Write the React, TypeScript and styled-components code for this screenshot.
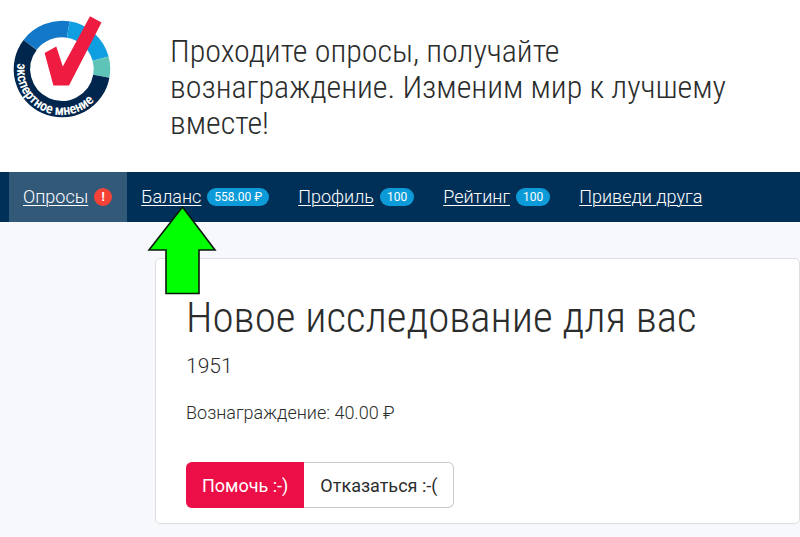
import React from "react";
import styled, { createGlobalStyle } from "styled-components";

const GlobalStyle = createGlobalStyle`
  * { box-sizing: border-box; }
  body {
    margin: 0;
    background: #f7f8fb;
    color: #2b2d2c;
    font-family: Roboto, "Liberation Sans", sans-serif;
    font-size: 18px;
    font-weight: 300;
    line-height: 26px;
  }
`;

const Header = styled.header`
  display: flex;
  align-items: flex-start;
  gap: 55px;
  min-height: 172px;
  padding: 13px 16px 0 10px;
  background: #fff;
`;

const LogoLink = styled.a`
  flex: none;
  display: block;
  line-height: 0;
`;

const Slogan = styled.p`
  margin: 0;
  padding-top: 20px;
  font-family: "Roboto Condensed", Roboto, sans-serif;
  font-size: 32px;
  line-height: 36px;
`;

const Nav = styled.nav`
  display: flex;
  height: 50px;
  padding-left: 9px;
  background: #003057;
`;

const NavItem = styled.div<{ $active?: boolean }>`
  position: relative;
  display: flex;
  padding: 0 15px 0 14px;
  background: ${(p) => (p.$active ? "#335979" : "transparent")};
`;

const NavLink = styled.a`
  display: flex;
  align-items: center;
  gap: 6px;
  color: #fff;
  white-space: nowrap;
  text-decoration: none;
`;

const NavLabel = styled.span`
  text-decoration: underline;
  text-decoration-thickness: 1px;
  text-underline-offset: 2px;
`;

const Badge = styled.span<{ $alert?: boolean }>`
  min-width: 18px;
  padding: 0 7px;
  border-radius: 9px;
  background: ${(p) => (p.$alert ? "#f44336" : "#0c9bd8")};
  font-size: 12px;
  font-weight: ${(p) => (p.$alert ? 700 : 400)};
  line-height: 18px;
  text-align: center;
`;

const Pointer = styled.svg`
  position: absolute;
  top: 33px;
  left: 20px;
  z-index: 1;
`;

const Main = styled.main`
  padding: 36px 0 13px 155px;
`;

const Card = styled.section`
  padding: 30px 30px 15px;
  border: 1px solid #dcdde0;
  border-radius: 5px;
  background: #fff;
`;

const Title = styled.h1`
  margin: 0;
  font-family: "Roboto Condensed", Roboto, sans-serif;
  font-size: 43px;
  font-weight: 300;
  line-height: 56px;
`;

const Code = styled.p`
  margin: 8px 0 0;
  font-size: 21px;
`;

const Reward = styled.p`
  margin: 21px 0 36px;
`;

const Actions = styled.div`
  display: flex;
`;

const Button = styled.button<{ $primary?: boolean }>`
  height: 46px;
  padding: 0 16px;
  border: 1px solid ${(p) => (p.$primary ? "#ec0f47" : "#c8c9cb")};
  border-width: ${(p) => (p.$primary ? "1px 0" : "1px 1px 1px 0")};
  border-radius: ${(p) => (p.$primary ? "6px 0 0 6px" : "0 6px 6px 0")};
  background: ${(p) => (p.$primary ? "#ec0f47" : "#fff")};
  color: ${(p) => (p.$primary ? "#fff" : "#2b2d2c")};
  font-family: inherit;
  font-size: 18px;
  font-weight: 400;
`;

const Logo = () => (
  <svg width="105" height="108" viewBox="10 13 105 108" role="img" aria-label="Экспертное мнение">
    <g fill="none" strokeWidth="16.5">
      <path d="M30.1 44.9A40 40 0 0 1 68.3 29.5" stroke="#1478c8" />
      <path d="M68.3 29.5A40 40 0 0 1 100.6 58.6" stroke="#0f9fe0" />
      <path d="M100.6 58.6A40 40 0 0 1 101.3 76.2" stroke="#5fc4b8" />
      <path d="M101.3 76.2A40 40 0 1 1 30.1 44.9" stroke="#00264d" />
    </g>
    <path id="motto" d="M17.7 63A44.500 44.500 0 0 0 105.500 78" fill="none" />
    <text fill="#fff" fontFamily="'Roboto Condensed', Roboto, sans-serif" fontSize="14" fontWeight="600">
      <textPath href="#motto">экспертное мнение</textPath>
    </text>
    <path d="M44.6 53L56.3 46.6L62.8 66.4L90 16.2L101.5 22.4L69 85.4H53.4Z" fill="#ee1c40" />
  </svg>
);

const items = [
  { label: "Опросы", badge: "!", alert: true, active: true },
  { label: "Баланс", badge: "558.00 ₽", pointed: true },
  { label: "Профиль", badge: "100" },
  { label: "Рейтинг", badge: "100" },
  { label: "Приведи друга" },
];

export default function App() {
  return (
    <>
      <GlobalStyle />
      <Header>
        <LogoLink href="#">
          <Logo />
        </LogoLink>
        <Slogan>Проходите опросы, получайте вознаграждение. Изменим мир к лучшему вместе!</Slogan>
      </Header>
      <Nav>
        {items.map((item) => (
          <NavItem key={item.label} $active={item.active}>
            <NavLink href="#">
              <NavLabel>{item.label}</NavLabel>
              {item.badge && <Badge $alert={item.alert}>{item.badge}</Badge>}
            </NavLink>
            {item.pointed && (
              <Pointer width="70" height="90" viewBox="0 0 70 90" aria-hidden="true">
                <path d="M35.5 2L68 45H52V88.5H19V45H2Z" fill="#0f0" stroke="#0a1a0a" strokeWidth="1.6" />
              </Pointer>
            )}
          </NavItem>
        ))}
      </Nav>
      <Main>
        <Card>
          <Title>Новое исследование для вас</Title>
          <Code>1951</Code>
          <Reward>Вознаграждение: 40.00 ₽</Reward>
          <Actions>
            <Button type="button" $primary>
              Помочь :-)
            </Button>
            <Button type="button">Отказаться :-(</Button>
          </Actions>
        </Card>
      </Main>
    </>
  );
}
